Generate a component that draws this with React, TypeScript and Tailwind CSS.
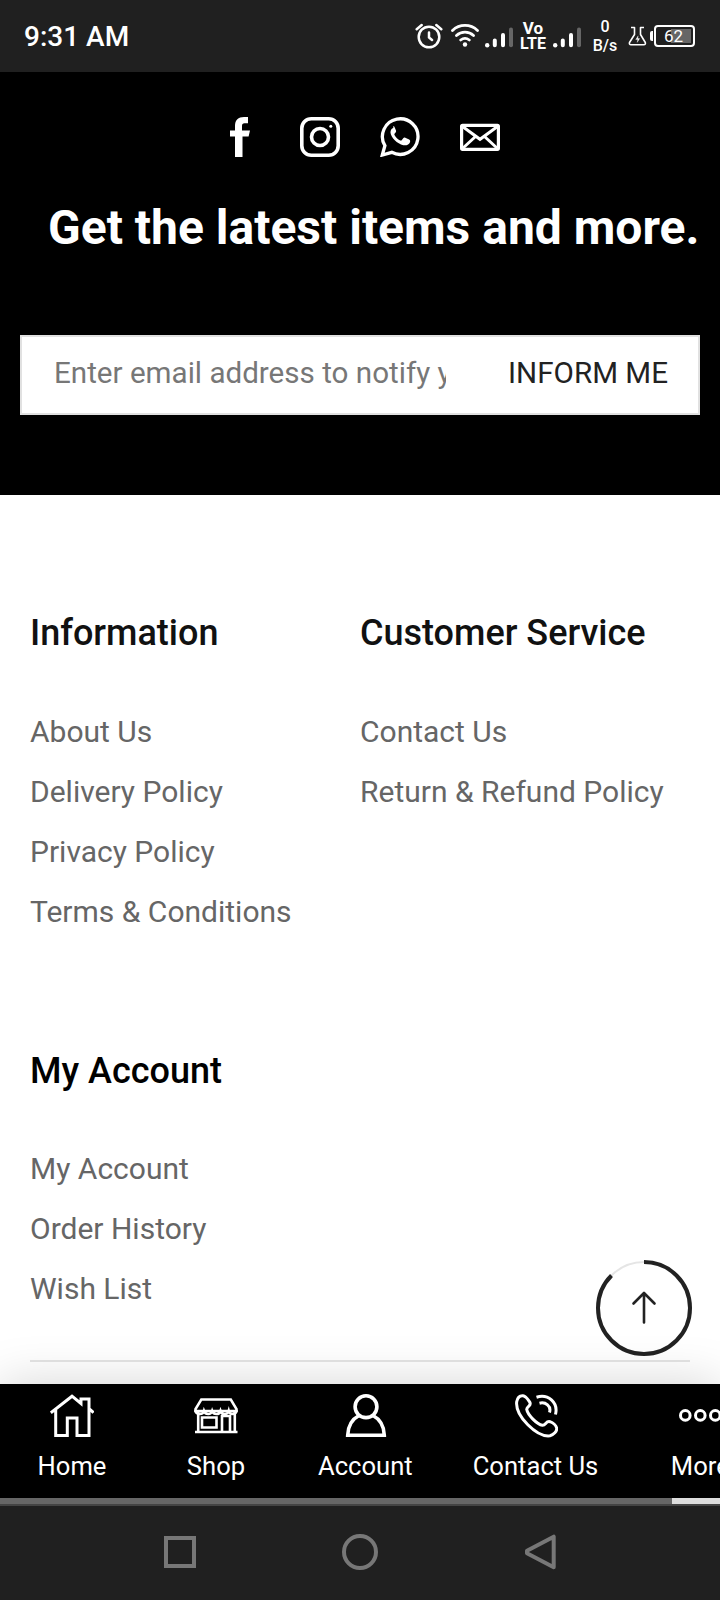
import type { ReactNode } from "react";

const infoLinks = ["About Us", "Delivery Policy", "Privacy Policy", "Terms & Conditions"];
const serviceLinks = ["Contact Us", "Return & Refund Policy"];
const accountLinks = ["My Account", "Order History", "Wish List"];

const SignalBars = () => (
  <svg width="28" height="28" viewBox="0 0 28 28" fill="none" strokeWidth="4" strokeLinecap="round">
    <circle cx="2.2" cy="23.2" r="2.2" fill="#fff" />
    <path d="M9.8 18.5v4.800M18 13v10.300" stroke="#fff" />
    <path d="M26 7.500v15.800" stroke="#666" />
  </svg>
);

const StatusBar = () => (
  <div className="flex h-[72px] items-center bg-[#202020] pr-[25px] pl-[24px] text-white">
    <span className="mt-[2px] text-[28px] leading-8 font-medium">9:31 AM</span>
    <svg className="ml-auto" width="28" height="28" viewBox="0 0 28 28" fill="none" stroke="#fff" strokeWidth="2.5" strokeLinecap="round">
      <circle cx="14" cy="15" r="10.3" />
      <path d="M14 10.500v5l3 2.500M1.700 7.200L6.700 3M26.300 7.200L21.300 3" />
    </svg>
    <svg className="ml-2" width="28" height="28" viewBox="0 0 28 28" fill="none" stroke="#fff" strokeWidth="2.8" strokeLinecap="round">
      <path d="M1.500 8.500a18 18 0 0 1 25 0M5.500 13.500a12.500 12.500 0 0 1 17 0M9.700 18a7 7 0 0 1 8.600 0" />
      <circle cx="14" cy="22.500" r="2.200" fill="#fff" stroke="none" />
    </svg>
    <div className="ml-1.5"><SignalBars /></div>
    <div className="ml-[7px] flex w-[26px] flex-col items-center text-[16px] leading-[15px] font-bold">
      <span className="text-[17px]">Vo</span>
      <span>LTE</span>
    </div>
    <div className="ml-[7px]"><SignalBars /></div>
    <div className="ml-[11px] flex w-[26px] flex-col items-center text-[16px] leading-[19px] font-medium">
      <span>0</span>
      <span>B/s</span>
    </div>
    <svg className="ml-[10px]" width="20" height="28" viewBox="0 0 20 28" fill="none" stroke="#fff" strokeWidth="1.6" strokeLinejoin="round">
      <path d="M3 5.500h3.500v7L1.500 20.500q-.6 2.200 1.500 2.200h12.800q2.100 0 1.500-2.200L12.500 12.500v-7H16" />
      <path d="M10.200 13.800l-2.500 3.800h2l-.5 2.800 2.500-3.800h-2z" fill="#fff" strokeWidth=".3" />
    </svg>
    <div className="ml-[2px] flex items-center">
      <div className="h-[10px] w-[3px] rounded-l-[2px] bg-white" />
      <div className="relative ml-px flex h-[22px] w-[41px] items-center justify-center rounded-[4px] border-2 border-white">
        <div className="absolute top-[2px] right-[2px] h-[14px] w-[20px] bg-[#666]" />
        <span className="relative -left-[1px] text-[17px] leading-none">62</span>
      </div>
    </div>
  </div>
);

const Newsletter = () => (
  <section className="h-[423px] bg-black px-5 pt-[45px] text-white">
    <div className="flex justify-center gap-10">
      <svg width="40" height="40" viewBox="0 0 40 40" fill="#fff">
        <path d="M15 40V19.500h-5v-6h5V9c0-6 3.300-9 9-9h4v6.300h-3.500c-1.800 0-2.500.9-2.500 2.700v4.500h8l-1.400 6H22.500V40z" />
      </svg>
      <svg width="40" height="40" viewBox="0 0 40 40" fill="none" stroke="#fff" strokeWidth="3.600">
        <rect x="1.800" y="1.800" width="36.400" height="36.400" rx="9.500" />
        <circle cx="20" cy="20" r="8.500" />
        <circle cx="30.800" cy="9.300" r="1.500" fill="#fff" stroke="none" />
      </svg>
      <svg width="40" height="40" viewBox="0 0 40 40" fill="none">
        <path d="M2.300 38l2.600-9.300A17.800 17.800 0 1 1 11.800 35.300z" stroke="#fff" strokeWidth="3.300" />
        <path d="M13.300 11c-1.600.2-3 2.200-2.800 4.800.5 4.700 6.700 11.200 12.800 12.400 3.300.6 6-1 6.700-3 .4-1.500.1-2.100-.9-2.600l-3.800-1.900c-.9-.4-1.500-.2-2.100.6l-1.500 1.900c-.5.5-.9.5-1.500.2-2.500-1.200-4.300-3-5.700-5.400-.3-.5-.2-1 .2-1.400l1.100-1.400c.4-.6.4-1.100.2-1.700l-1.500-3.600c-.3-.7-.7-.9-1.200-.9z" fill="#fff" />
      </svg>
      <svg width="40" height="40" viewBox="0 0 40 40" fill="none" stroke="#fff" strokeWidth="3.200">
        <rect x="1.600" y="8.300" width="36.800" height="24" rx="1" />
        <path d="M2.500 9.500L20 22.300 37.500 9.500M2.500 31.500L15.500 19.500M37.500 31.500L24.500 19.500" strokeWidth="3" />
      </svg>
    </div>
    <h2 className="mt-[43px] ml-[28px] text-[48px] leading-[56px] font-bold whitespace-nowrap">Get the latest items and more.</h2>
    <form className="mt-[79px] flex h-20 items-center border-2 border-[#e1e1e1] bg-white pr-[30px] pl-8">
      <input
        type="email"
        placeholder="Enter email address to notify you"
        className="mb-1 h-12 w-[392px] text-[29.6px] text-[#222] outline-none placeholder:text-[#777]"
      />
      <button type="button" className="mb-1 ml-auto text-[29.6px] leading-9 text-[#222]">INFORM ME</button>
    </form>
  </section>
);

type LinkColumnProps = {
  title: string;
  links: string[];
};

const LinkColumn = ({ title, links }: LinkColumnProps) => (
  <div>
    <h3 className="text-[36px] leading-[42px] font-medium whitespace-nowrap">{title}</h3>
    <ul className="mt-[47.5px] text-[30px] leading-[60px] whitespace-nowrap text-[#666]">
      {links.map((link) => (
        <li key={link}>{link}</li>
      ))}
    </ul>
  </div>
);

const ScrollTop = () => (
  <button className="absolute top-[765px] left-[596px]" aria-label="Back to top">
    <svg width="96" height="96" viewBox="0 0 96 96" fill="none">
      <circle cx="48" cy="48" r="46" fill="#fff" stroke="#e5e5e5" strokeWidth="2" />
      <circle cx="48" cy="48" r="46" stroke="#222" strokeWidth="4" pathLength="100" strokeDasharray="87.5 12.5" transform="rotate(-90 48 48)" />
      <path d="M48 62.500V33M37.500 43.500L48 33l10.500 10.500" stroke="#222" strokeWidth="2.600" strokeLinecap="round" strokeLinejoin="round" />
    </svg>
  </button>
);

type NavItemProps = {
  label: string;
  children: ReactNode;
};

const NavItem = ({ label, children }: NavItemProps) => (
  <div className="flex min-w-[144px] shrink-0 flex-col items-center px-[30px] pt-[10px]">
    <svg width="44" height="44" viewBox="0 0 44 44" fill="none" stroke="#fff" strokeWidth="3">
      {children}
    </svg>
    <span className="mt-[13px] text-[25.6px] leading-[30px] whitespace-nowrap">{label}</span>
  </div>
);

const BottomNav = () => (
  <nav className="relative h-[122px] bg-black text-white shadow-[0_0_50px_rgba(0,0,0,0.17)]">
    <div className="flex h-[114px] overflow-hidden">
      <NavItem label="Home">
        <path d="M.8 18.700L22 2.200l9 7.300V5h8v36.500H27V24h-9.700v17.500H5.700V15.500M39 14.500l4.500 4.200" />
      </NavItem>
      <NavItem label="Shop">
        <path d="M7.300 5.500h29.500L42.500 15v2H1.500v-2zM1 38h42.500M4.200 18v20M40.800 18v20" strokeWidth="2.600" />
        <path d="M1.500 16c0 5 7.500 5 8.500 1 1.500 4 7 4 8.200 0 1.500 4 7 4 8.300 0 1.300 4 7 4 8.200 0 1 4 7.800 4 7.800-1" strokeWidth="2.600" />
        <path d="M8 23.500h14.500v10H8zM28 38V22h8v16" strokeWidth="2.600" />
      </NavItem>
      <NavItem label="Account">
        <circle cx="23" cy="12.700" r="10.900" strokeWidth="3.600" />
        <path d="M16 21.500C8.500 25.500 5 31.500 4.700 41.200h36.600C41 31.500 37.500 25.500 30 21.500" strokeWidth="3.600" />
      </NavItem>
      <NavItem label="Contact Us">
        <path d="M2.700 7.700C3.500 3.500 6.200 1.500 9 1.700c3 .3 4.800 3.500 6.800 6.500 2 3.800-2.800 4-3.100 7.100 1 5.700 10.300 15.200 15.800 16 3.300.2 3.500-4.800 7.500-3.600 3 1 6.200 3.800 6.700 6.500.5 3.200-3.200 6.600-6.700 7.600C23 43.500 1 22 2.700 7.700z" />
        <path d="M22.500 3.200C34-.5 44.500 8.500 41.500 20.500M25.500 9.200C31.500 7.700 37.500 12 35.500 18.500" />
      </NavItem>
      <NavItem label="More">
        <circle cx="7.300" cy="21.400" r="4.800" />
        <circle cx="22.300" cy="21.400" r="4.800" />
        <circle cx="37.300" cy="21.400" r="4.800" />
      </NavItem>
    </div>
    <div className="flex h-1.5 justify-end bg-[#666]">
      <div className="w-12 bg-[#ddd]" />
    </div>
    <div className="h-0.5 bg-[#444]" />
  </nav>
);

const SystemNav = () => (
  <div className="relative h-[94px] bg-[#202020] pt-[28px]">
    <div className="flex h-9 items-center pl-[164px]">
      <div className="size-8 border-4 border-[#777]" />
      <div className="ml-[146px] size-9 rounded-full border-4 border-[#777]" />
      <svg className="ml-[146px]" width="34" height="36" viewBox="0 0 34 36" fill="none" stroke="#777" strokeWidth="4">
        <path d="M29.700 2.700v30.600L3 19.200v-2.400z" strokeLinejoin="round" />
      </svg>
    </div>
  </div>
);

const App = () => {
  return (
    <div className="h-[1600px] w-[720px] overflow-hidden bg-white font-[Roboto,sans-serif]">
      <StatusBar />
      <Newsletter />
      <main className="relative h-[889px] px-[30px] pt-[117px]">
        <div className="grid grid-cols-2 text-[#111]">
          <LinkColumn title="Information" links={infoLinks} />
          <LinkColumn title="Customer Service" links={serviceLinks} />
        </div>
        <div className="mt-[108px] text-black">
          <LinkColumn title="My Account" links={accountLinks} />
        </div>
        <div className="mt-[41px] h-0.5 bg-[#e5e5e5]" />
        <ScrollTop />
      </main>
      <BottomNav />
      <SystemNav />
    </div>
  );
};

export default App;
